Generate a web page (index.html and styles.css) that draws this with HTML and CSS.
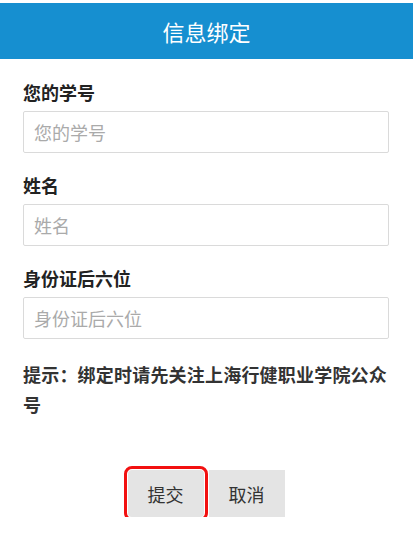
FILE: index.html
```html
<!DOCTYPE html>
<html lang="zh-CN">
<head>
  <meta charset="UTF-8">
  <title>信息绑定</title>
  <link rel="stylesheet" href="styles.css">
</head>
<body>
  <div class="header">信息绑定</div>

  <form class="form">
    <div class="field">
      <label for="xuehao">您的学号</label>
      <input id="xuehao" type="text" placeholder="您的学号">
    </div>
    <div class="field">
      <label for="xingming">姓名</label>
      <input id="xingming" type="text" placeholder="姓名">
    </div>
    <div class="field">
      <label for="sfz">身份证后六位</label>
      <input id="sfz" type="text" placeholder="身份证后六位">
    </div>

    <p class="tip">提示：绑定时请先关注上海行健职业学院公众号</p>

    <div class="buttons">
      <button type="button" class="btn btn-marked">提交</button>
      <button type="button" class="btn">取消</button>
    </div>
  </form>
</body>
</html>
```

FILE: styles.css
```css
body { margin: 0; background: #fff; font-family: "Noto Sans CJK SC", "Noto Sans", sans-serif; color: #222; }
.header { margin-top: 3px; height: 56px; line-height: 56px; background: #168fd0; color: #fff; text-align: center; font-size: 22px; }
.form { padding: 21px 24px 0 23px; }
.field { margin-bottom: 20px; }
.field:last-of-type { margin-bottom: 0; }
.field label { display: block; font-size: 18px; font-weight: bold; line-height: 24px; margin-bottom: 7px; }
.field input { display: block; box-sizing: border-box; width: 100%; height: 42px; border: 1px solid #dadada; border-radius: 2px; padding: 0 10px; font-size: 18px; font-family: inherit; color: #333; background: #fff; }
.field input::placeholder { color: #aaa; }
.tip { margin: 16px 0 0; font-size: 18px; letter-spacing: 0.2px; font-weight: bold; line-height: 30px; color: #333; }
.buttons { display: flex; justify-content: center; gap: 5px; margin-top: 51px; }
.btn { width: 76px; height: 47px; border: none; background: #e4e4e4; color: #333; font-size: 18px; font-family: inherit; }
.btn-marked { outline: 3px solid #f21010; outline-offset: 1px; border-radius: 4px; }
```
